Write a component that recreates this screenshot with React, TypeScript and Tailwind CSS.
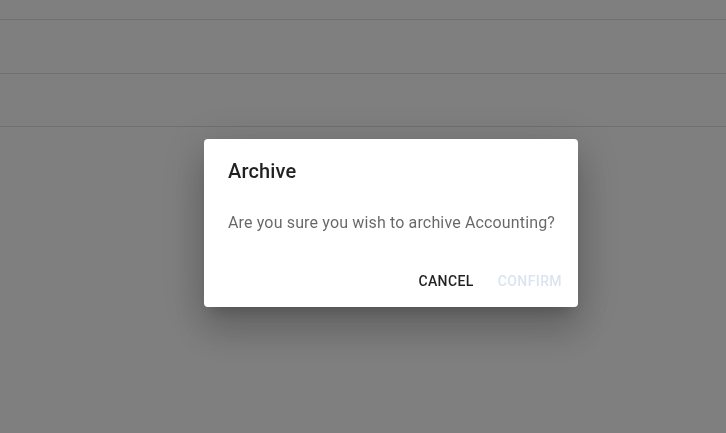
export default function App() {
  return (
    <div className="relative h-[433px] w-[726px] overflow-hidden bg-white font-['Roboto',sans-serif]">
      <div className="flex flex-col">
        <div className="h-[20px] border-b border-[#e0e0e0]" />
        <div className="h-[54px] border-b border-[#e0e0e0]" />
        <div className="h-[53px] border-b border-[#e0e0e0]" />
      </div>

      <div className="fixed inset-0 bg-black/50">
        <div className="absolute left-[204px] top-[139px] w-[374px] rounded bg-white shadow-[0px_11px_15px_-7px_rgba(0,0,0,0.2),0px_24px_38px_3px_rgba(0,0,0,0.14),0px_9px_46px_8px_rgba(0,0,0,0.12)]">
          <h2 className="px-6 py-4 text-[20px] font-medium leading-[32px] tracking-[0.0075em] text-black/[0.87]">
            Archive
          </h2>
          <div className="px-6 pb-5 pt-2">
            <p className="whitespace-nowrap text-base leading-6 tracking-[0.00938em] text-black/60">
              Are you sure you wish to archive Accounting?
            </p>
          </div>
          <div className="flex justify-end gap-2 p-2">
            <button className="h-9 min-w-16 rounded px-2 text-sm font-medium uppercase tracking-[0.02857em] text-black/[0.87]">
              Cancel
            </button>
            <button
              disabled
              className="h-9 min-w-16 rounded px-2 text-sm font-medium uppercase tracking-[0.02857em] text-[#dbe4f0]"
            >
              Confirm
            </button>
          </div>
        </div>
      </div>
    </div>
  );
}
